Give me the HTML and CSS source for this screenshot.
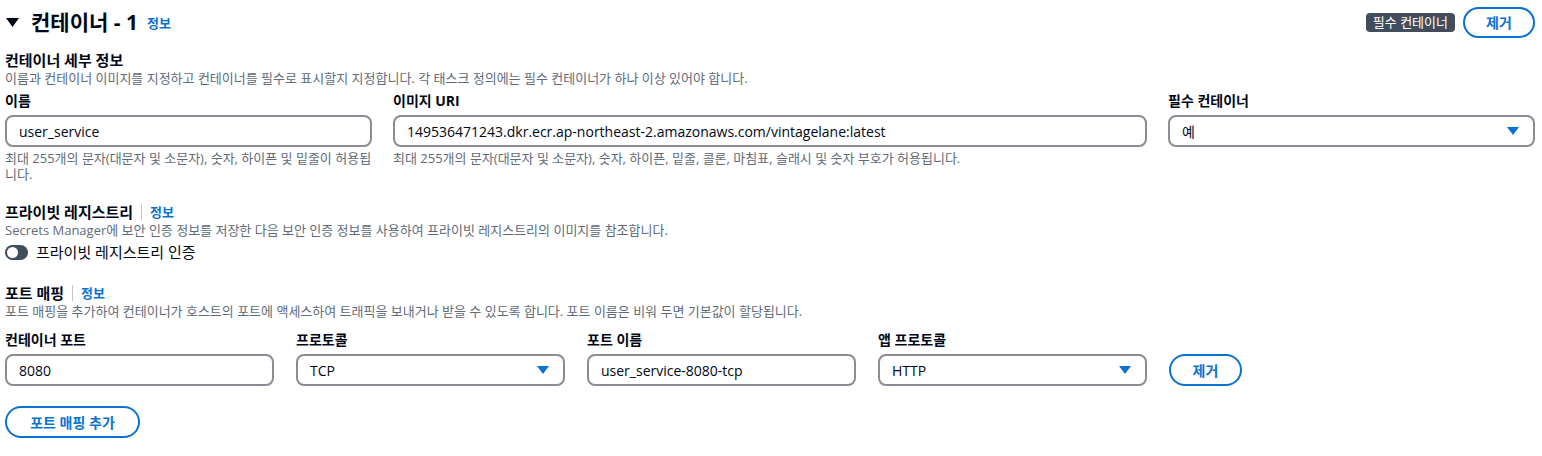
FILE: index.html
```html
<!DOCTYPE html>
<html lang="ko">
<head>
<meta charset="utf-8">
<link rel="stylesheet" href="styles.css">
</head>
<body>
<div class="page">
  <div class="head">
    <div class="head-left">
      <svg class="caret" width="13" height="9" viewBox="0 0 13 9"><path d="M0 0 H13 L6.5 9 Z" fill="#000716"/></svg>
      <h2 class="title">컨테이너 - 1</h2>
      <a class="info">정보</a>
    </div>
    <div class="head-right">
      <span class="badge">필수 컨테이너</span>
      <button class="btn btn-wide">제거</button>
    </div>
  </div>

  <div class="section first">
    <div class="sec-title">컨테이너 세부 정보</div>
    <div class="desc">이름과 컨테이너 이미지를 지정하고 컨테이너를 필수로 표시할지 지정합니다. 각 태스크 정의에는 필수 컨테이너가 하나 이상 있어야 합니다.</div>
    <div class="grid3">
      <div class="field">
        <label class="label">이름</label>
        <div class="input">user_service</div>
        <div class="hint">최대 255개의 문자(대문자 및 소문자), 숫자, 하이픈 및 밑줄이 허용됩니다.</div>
      </div>
      <div class="field">
        <label class="label">이미지 URI</label>
        <div class="input">149536471243.dkr.ecr.ap-northeast-2.amazonaws.com/vintagelane:latest</div>
        <div class="hint">최대 255개의 문자(대문자 및 소문자), 숫자, 하이픈, 밑줄, 콜론, 마침표, 슬래시 및 숫자 부호가 허용됩니다.</div>
      </div>
      <div class="field">
        <label class="label">필수 컨테이너</label>
        <div class="input select">예<svg class="arrow" width="12" height="8" viewBox="0 0 12 8"><path d="M0 0 H12 L6 8 Z" fill="#0972d3"/></svg></div>
      </div>
    </div>
  </div>

  <div class="section second">
    <div class="sec-title">프라이빗 레지스트리<span class="sep"></span><a class="info">정보</a></div>
    <div class="desc">Secrets Manager에 보안 인증 정보를 저장한 다음 보안 인증 정보를 사용하여 프라이빗 레지스트리의 이미지를 참조합니다.</div>
    <div class="toggle-row">
      <span class="toggle"><span class="knob"></span></span>
      <span class="toggle-label">프라이빗 레지스트리 인증</span>
    </div>
  </div>

  <div class="section third">
    <div class="sec-title">포트 매핑<span class="sep"></span><a class="info">정보</a></div>
    <div class="desc">포트 매핑을 추가하여 컨테이너가 호스트의 포트에 액세스하여 트래픽을 보내거나 받을 수 있도록 합니다. 포트 이름은 비워 두면 기본값이 할당됩니다.</div>
    <div class="grid5">
      <div class="field">
        <label class="label">컨테이너 포트</label>
        <div class="input">8080</div>
      </div>
      <div class="field">
        <label class="label">프로토콜</label>
        <div class="input select">TCP<svg class="arrow" width="12" height="8" viewBox="0 0 12 8"><path d="M0 0 H12 L6 8 Z" fill="#0972d3"/></svg></div>
      </div>
      <div class="field">
        <label class="label">포트 이름</label>
        <div class="input">user_service-8080-tcp</div>
      </div>
      <div class="field">
        <label class="label">앱 프로토콜</label>
        <div class="input select">HTTP<svg class="arrow" width="12" height="8" viewBox="0 0 12 8"><path d="M0 0 H12 L6 8 Z" fill="#0972d3"/></svg></div>
      </div>
      <div class="field end">
        <button class="btn btn-remove">제거</button>
      </div>
    </div>
    <button class="btn btn-add">포트 매핑 추가</button>
  </div>
</div>
</body>
</html>
```

FILE: styles.css
```css
* { box-sizing: border-box; }
html, body { margin: 0; padding: 0; background: #ffffff; }
body {
  font-family: "Open Sans", "Noto Sans CJK KR", sans-serif;
  color: #000716;
  font-size: 14px;
}
.page { padding: 6px 7px 0 5px; }

.head { display: flex; justify-content: space-between; align-items: center; height: 32px; }
.head-left { display: flex; align-items: center; height: 32px; }
.caret { margin: 0 12px 0 1px; }
.title { margin: 0; font-size: 21px; font-weight: 700; line-height: 30px; height: 30px; }
.info { color: #0972d3; font-size: 13px; font-weight: 700; margin-left: 9px; cursor: pointer; }
.head-right { display: flex; align-items: center; gap: 8px; }
.badge {
  background: #414d5c; color: #fff; font-size: 13px; line-height: 19px;
  padding: 0 7px; border-radius: 4px; height: 19px; display: block; overflow: hidden;
}
.btn {
  font-family: inherit; background: #fff; color: #0972d3; font-weight: 700;
  font-size: 14px; border: 2px solid #0972d3; border-radius: 20px; cursor: pointer;
  padding: 0; display: flex; align-items: center; justify-content: center;
}
.btn-wide { width: 72px; height: 31px; }

.section.first { margin-top: 12px; }
.sec-title { font-size: 15px; font-weight: 700; line-height: 20px; height: 20px; display: flex; align-items: center; }
.sec-title .info { margin-left: 0; font-size: 13px; }
.sep { display: inline-block; width: 1px; height: 16px; background: #c6c6cd; margin: 0 8px 0 8px; }
.desc { font-size: 13px; color: #5f6b7a; line-height: 16px; }

.grid3 { display: grid; grid-template-columns: 367px 754px 1fr; column-gap: 21px; margin-top: 5px; }
.grid5 { display: grid; grid-template-columns: 269px 269px 269px 269px auto; column-gap: 22px; margin-top: 11px; }
.field { display: flex; flex-direction: column; }
.field.end { justify-content: flex-end; }
.label { display: block; font-size: 14px; font-weight: 700; line-height: 20px; height: 20px; margin-bottom: 4px; }
.input {
  height: 32px; border: 2px solid #8c8c94; border-radius: 8px; padding: 0 12px;
  display: flex; align-items: center; font-size: 14px; color: #000716; white-space: nowrap;
}
.select { justify-content: space-between; padding-right: 14px; }
.hint { font-size: 13px; color: #5f6b7a; line-height: 16px; margin-top: 3px; }

.section.second { margin-top: 20px; }
.toggle-row { display: flex; align-items: center; margin-top: 4px; height: 20px; }
.toggle { width: 23px; height: 15px; border-radius: 8px; background: #414d5c; position: relative; margin-right: 8px; }
.knob { position: absolute; left: 2px; top: 2px; width: 11px; height: 11px; border-radius: 50%; background: #fff; }
.toggle-label { font-size: 15px; line-height: 20px; }

.section.third { margin-top: 21px; }
.btn-remove { width: 73px; height: 32px; }
.btn-add { width: 135px; height: 32px; margin-top: 20px; }
```
